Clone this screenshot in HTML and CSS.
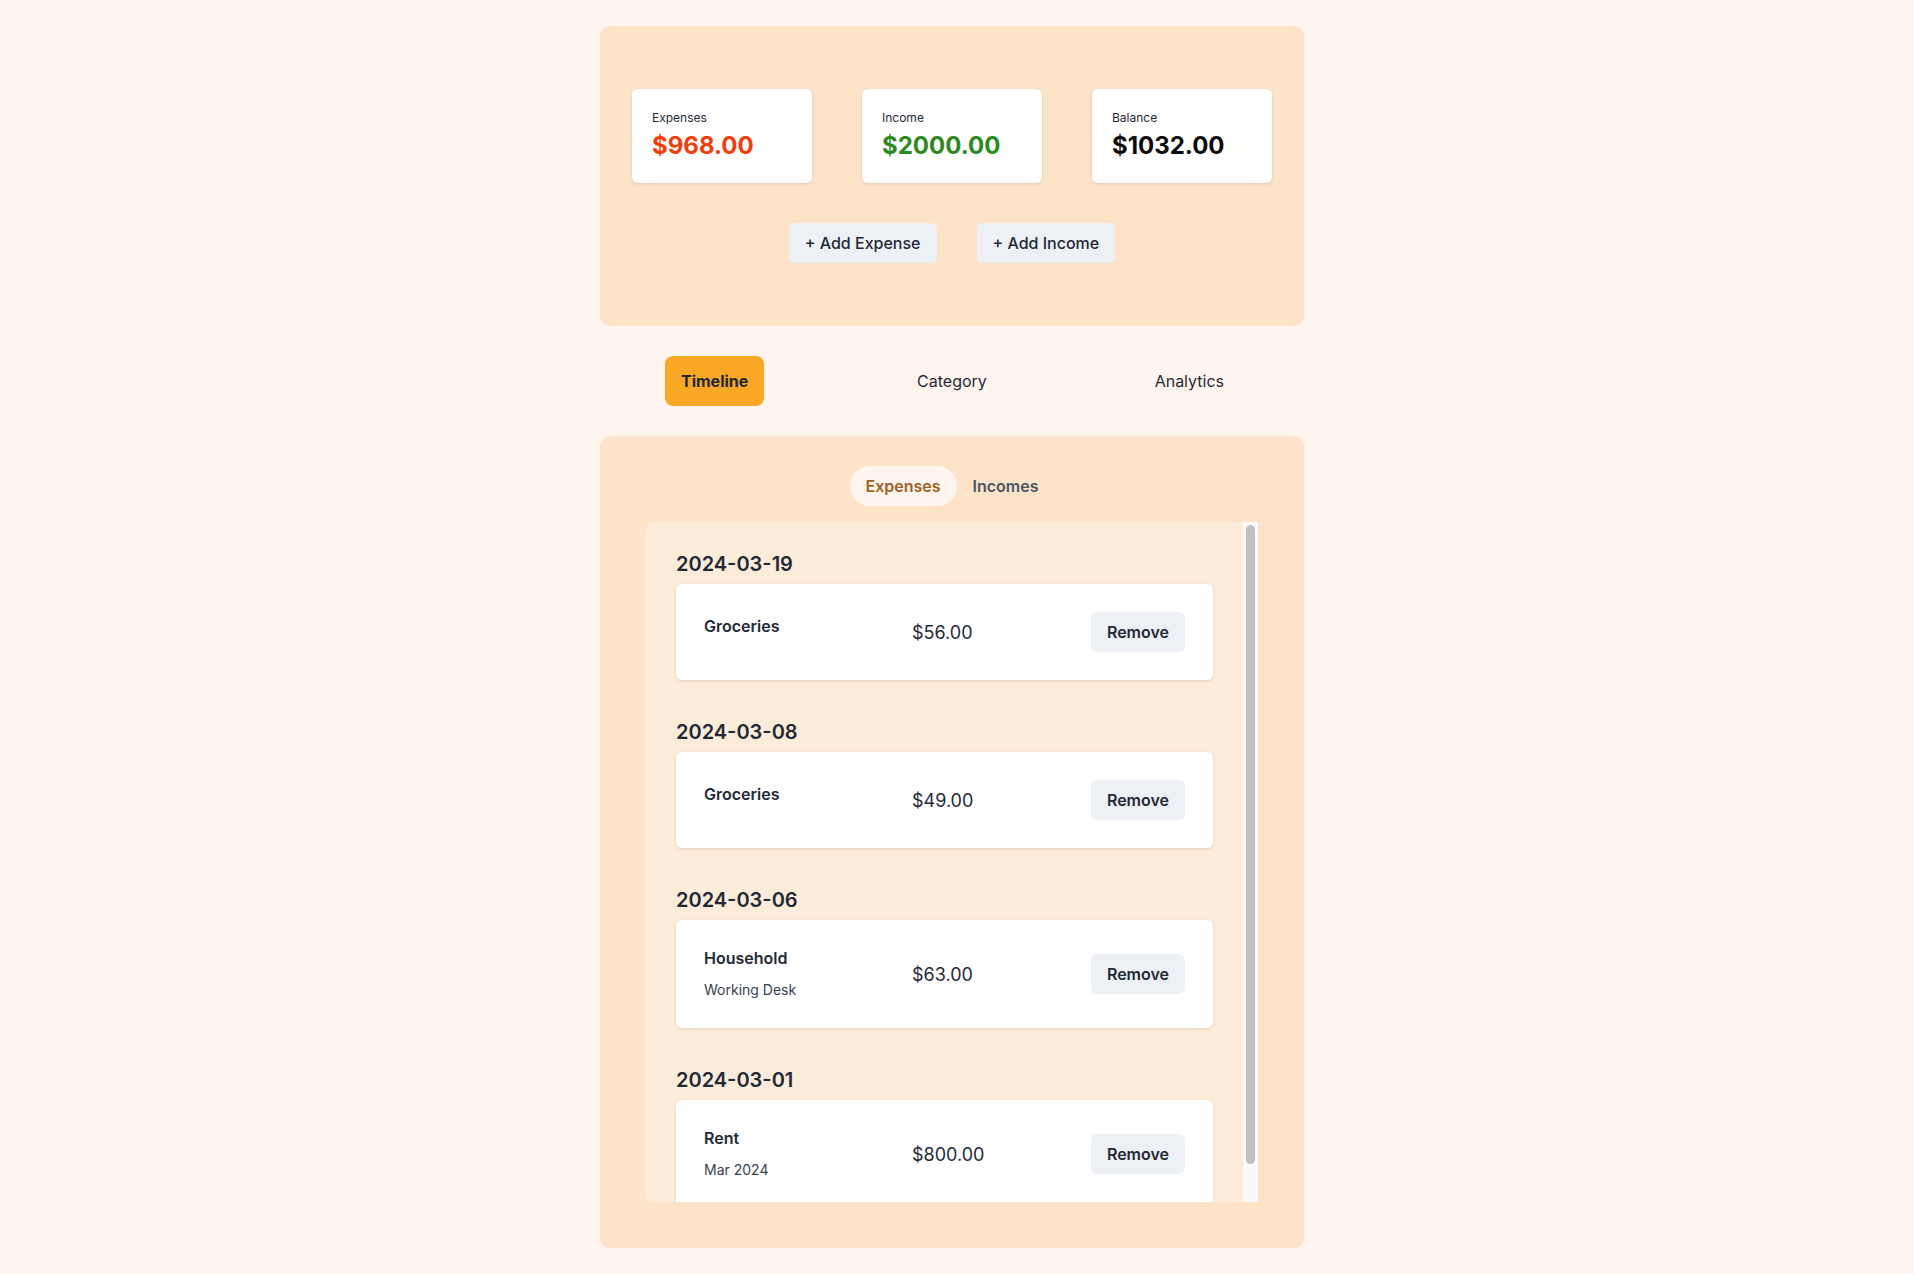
FILE: index.html
```html
<!DOCTYPE html>
<html lang="en">
<head>
<meta charset="utf-8">
<title>Budget</title>
<link rel="stylesheet" href="styles.css">
</head>
<body>
<main class="app">
  <section class="summary">
    <div class="stats">
      <div class="stat">
        <div class="stat-label">Expenses</div>
        <div class="stat-value expense">$968.00</div>
      </div>
      <div class="stat">
        <div class="stat-label">Income</div>
        <div class="stat-value income">$2000.00</div>
      </div>
      <div class="stat">
        <div class="stat-label">Balance</div>
        <div class="stat-value balance">$1032.00</div>
      </div>
    </div>
    <div class="actions">
      <button class="btn add">+ Add Expense</button>
      <button class="btn add">+ Add Income</button>
    </div>
  </section>

  <nav class="tabs">
    <button class="tab active">Timeline</button>
    <button class="tab">Category</button>
    <button class="tab">Analytics</button>
  </nav>

  <section class="timeline">
    <div class="subtabs">
      <button class="subtab active">Expenses</button>
      <button class="subtab">Incomes</button>
    </div>
    <div class="list-wrap">
      <div class="list">
        <div class="group">
          <h3 class="date">2024-03-19</h3>
          <div class="item">
            <div class="item-info">
              <div class="item-title">Groceries</div>
              <div class="item-desc"></div>
            </div>
            <div class="item-amount">$56.00</div>
            <button class="btn remove">Remove</button>
          </div>
        </div>
        <div class="group">
          <h3 class="date">2024-03-08</h3>
          <div class="item">
            <div class="item-info">
              <div class="item-title">Groceries</div>
              <div class="item-desc"></div>
            </div>
            <div class="item-amount">$49.00</div>
            <button class="btn remove">Remove</button>
          </div>
        </div>
        <div class="group">
          <h3 class="date">2024-03-06</h3>
          <div class="item">
            <div class="item-info">
              <div class="item-title">Household</div>
              <div class="item-desc">Working Desk</div>
            </div>
            <div class="item-amount">$63.00</div>
            <button class="btn remove">Remove</button>
          </div>
        </div>
        <div class="group">
          <h3 class="date">2024-03-01</h3>
          <div class="item">
            <div class="item-info">
              <div class="item-title">Rent</div>
              <div class="item-desc">Mar 2024</div>
            </div>
            <div class="item-amount">$800.00</div>
            <button class="btn remove">Remove</button>
          </div>
        </div>
      </div>
      <div class="scrollbar"><div class="thumb"></div></div>
    </div>
  </section>
</main>
</body>
</html>
```
FILE: styles.css
```css
* { box-sizing: border-box; }

html, body {
  margin: 0;
  padding: 0;
}

body {
  background: #fff5ef;
  font-family: Inter, "Noto Sans", "Liberation Sans", sans-serif;
  color: #1f2937;
  padding: 26px 10px 26px 0;
}

.app {
  width: 704px;
  margin: 0 auto;
}

button {
  font-family: inherit;
  border: none;
  cursor: pointer;
}

.summary {
  background: #fde4c8;
  border-radius: 10px;
  padding: 63px 32px 63px;
}

.stats {
  display: grid;
  grid-template-columns: repeat(3, 180px);
  gap: 50px;
}

.stat {
  background: #ffffff;
  border-radius: 6px;
  padding: 21px 20px 21px;
  box-shadow: 0 1px 3px rgba(120, 80, 40, 0.18);
}

.stat-label {
  font-size: 12px;
  line-height: 16px;
  color: #1f2937;
}

.stat-value {
  margin-top: 4px;
  font-size: 24px;
  line-height: 32px;
  font-weight: 700;
}

.stat-value.expense { color: #f33c0a; }
.stat-value.income { color: #2b8a1e; }
.stat-value.balance { color: #0b0b0b; }

.actions {
  display: flex;
  justify-content: center;
  gap: 40px;
  margin-top: 40px;
}

.btn {
  height: 40px;
  padding: 0 16px;
  background: #edf0f5;
  color: #1f2937;
  border-radius: 6px;
  font-size: 16px;
  font-weight: 600;
}

.btn.add {
  font-weight: 500;
}

.tabs {
  display: grid;
  grid-template-columns: repeat(3, 1fr);
  gap: 8px;
  justify-items: center;
  margin: 30px 0;
}

.tab {
  background: transparent;
  padding: 13px 16px;
  line-height: 24px;
  font-size: 16px;
  font-weight: 400;
  color: #1f2937;
  border-radius: 8px;
}

.tab.active {
  background: #f9a825;
  font-weight: 700;
}

.timeline {
  background: #fde4c8;
  border-radius: 10px;
  padding: 30px 46px 46px;
}

.subtabs {
  display: flex;
  justify-content: center;
  margin-bottom: 16px;
}

.subtab {
  height: 40px;
  padding: 0 16px;
  border-radius: 20px;
  background: transparent;
  font-size: 16px;
  font-weight: 600;
  color: #4b5563;
}

.subtab.active {
  background: #fff5ef;
  color: #a0621e;
}

.list-wrap {
  display: flex;
  height: 680px;
  background: #fdecd9;
  border-radius: 8px 0 0 8px;
  overflow: hidden;
}

.list {
  flex: 1;
  min-width: 0;
  overflow: hidden;
  padding: 30px;
}

.scrollbar {
  flex: none;
  width: 15px;
  background: #f9f9f9;
  padding: 3px 3px 0;
}

.thumb {
  height: 639px;
  background: #c1c1c1;
  border-radius: 5px;
}

.group + .group {
  margin-top: 40px;
}

.date {
  margin: 0 0 8px;
  font-size: 20px;
  line-height: 24px;
  font-weight: 600;
  color: #1f2937;
}

.item {
  display: flex;
  align-items: center;
  background: #ffffff;
  border-radius: 6px;
  padding: 28px;
  box-shadow: 0 1px 3px rgba(120, 80, 40, 0.18);
}

.item-info {
  width: 208px;
  flex: none;
}

.item-title {
  font-size: 16px;
  line-height: 20px;
  font-weight: 600;
  color: #1f2937;
}

.item-desc {
  margin-top: 12px;
  font-size: 14px;
  line-height: 20px;
  color: #374151;
}

.item-desc:empty {
  height: 0;
}

.item-amount {
  flex: 1;
  font-size: 18px;
  color: #1f2937;
}

.remove {
  flex: none;
}
```
